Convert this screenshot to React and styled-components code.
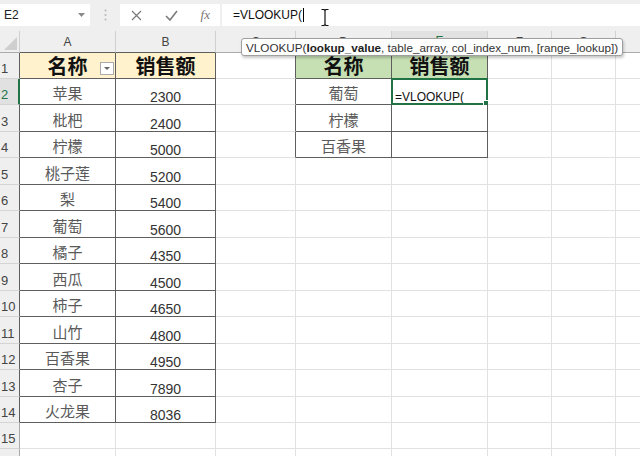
import React from "react";
import styled, { createGlobalStyle } from "styled-components";

const DARK = "#5e5e5e";
const GRID = "#e1e1e1";
const GREEN = "#217346";
const CJK = `"Noto Sans CJK SC", "Noto Sans", sans-serif`;

const Global = createGlobalStyle`
  html, body { margin: 0; padding: 0; background: #fff; }
  body {
    width: 640px; height: 456px; overflow: hidden;
    font-family: "Liberation Sans", Arial, sans-serif;
  }
`;

const Page = styled.div`
  width: 640px;
  height: 456px;
  display: flex;
  flex-direction: column;
  position: relative;
  overflow: hidden;
  background: #fff;
`;

const FormulaBar = styled.div`
  height: 31px;
  flex: none;
  box-sizing: border-box;
  padding: 4px 0 5px;
  background: #efefef;
  display: flex;
  align-items: stretch;
`;

const NameBox = styled.div`
  width: 90px;
  box-sizing: border-box;
  background: #fff;
  display: flex;
  align-items: center;
  justify-content: space-between;
  padding: 0 5px 0 4px;
  font-size: 12px;
  color: #222;
`;

const Grip = styled.div`
  width: 30px;
  display: flex;
  align-items: center;
  justify-content: center;
`;

const FxBox = styled.div`
  width: 100px;
  box-sizing: border-box;
  background: #fff;
  display: flex;
  align-items: center;
  justify-content: space-between;
  padding: 0 10px 0 11px;
`;

const FxLabel = styled.span`
  font-family: "Liberation Serif", serif;
  font-style: italic;
  font-size: 13px;
  color: #777;
`;

const FormulaInput = styled.div`
  flex: 1;
  margin-left: 2px;
  background: #fff;
  display: flex;
  align-items: center;
  padding-left: 11px;
  font-size: 12px;
  color: #111;
  position: relative;
`;

const TextCaret = styled.span`
  display: inline-block;
  width: 1px;
  height: 14px;
  background: #000;
  margin-left: 1px;
`;

const IBeam = styled.svg`
  position: absolute;
  left: 98px;
  top: 4px;
`;

const Sheet = styled.div`
  display: grid;
  grid-template-columns: 20px 96px 100px 80px 96px 96px 64px 64px 64px;
  grid-template-rows: ${(p) => p.$rows};
  flex: none;
  position: relative;
`;

const Corner = styled.div`
  position: relative;
  box-sizing: border-box;
  background: #efefef;
  border-right: 1px solid #d0d0d0;
  border-bottom: 1px solid #ababab;
  &::after {
    content: "";
    position: absolute;
    right: 2px;
    bottom: 2px;
    width: 0;
    height: 0;
    border-left: 13px solid transparent;
    border-bottom: 13px solid #cfcfcf;
  }
`;

const ColHead = styled.div`
  box-sizing: border-box;
  background: ${(p) => (p.$sel ? "#e1e1e1" : "#efefef")};
  border-right: 1px solid #d0d0d0;
  border-bottom: ${(p) => (p.$sel ? `2px solid ${GREEN}` : `1px solid ${p.$bd ? DARK : "#ababab"}`)};
  color: ${(p) => (p.$sel ? GREEN : "#444")};
  font-size: 12px;
  display: flex;
  align-items: center;
  justify-content: center;
`;

const RowHead = styled.div`
  box-sizing: border-box;
  background: ${(p) => (p.$sel ? "#e1e1e1" : "#efefef")};
  border-right: ${(p) => (p.$sel ? `2px solid ${GREEN}` : `1px solid ${p.$rd ? DARK : "#ababab"}`)};
  border-bottom: 1px solid #d4d4d4;
  color: ${(p) => (p.$sel ? GREEN : "#444")};
  font-size: 13px;
  line-height: 13px;
  display: flex;
  align-items: flex-end;
  padding: 0 0 3px 1px;
`;

const Cell = styled.div`
  position: relative;
  box-sizing: border-box;
  min-width: 0;
  border-right: 1px solid ${(p) => (p.$rd ? DARK : GRID)};
  border-bottom: 1px solid ${(p) => (p.$bd ? DARK : GRID)};
  background: ${(p) => p.$fill || "#fff"};
  display: flex;
  justify-content: ${(p) => (p.$left ? "flex-start" : "center")};
  align-items: flex-end;
`;

const HeadText = styled.span`
  align-self: center;
  font-family: ${CJK};
  font-weight: 700;
  font-size: 20px;
  line-height: 20px;
  color: #111;
  margin-top: 1px;
`;

const NameText = styled.span`
  font-family: ${CJK};
  font-size: 15px;
  line-height: 15px;
  color: #5a5a5a;
  padding-bottom: 4px;
`;

const NumText = styled.span`
  font-size: 14px;
  line-height: 14px;
  color: #333;
  padding-bottom: 0;
`;

const FormulaText = styled.span`
  font-size: 12px;
  line-height: 12px;
  color: #111;
  padding: 0 0 1px 3px;
`;

const Selection = styled.div`
  position: absolute;
  top: -1px;
  left: -1px;
  right: -1px;
  bottom: -1px;
  border: 2px solid ${GREEN};
  pointer-events: none;
  &::after {
    content: "";
    position: absolute;
    right: -4px;
    bottom: -4px;
    width: 5px;
    height: 5px;
    background: ${GREEN};
    border: 1px solid #fff;
  }
`;

const FilterButton = styled.div`
  position: absolute;
  right: 1px;
  bottom: 3px;
  width: 14px;
  height: 13px;
  box-sizing: border-box;
  background: #fff;
  border: 1px solid #ababab;
  display: flex;
  align-items: center;
  justify-content: center;
  &::after {
    content: "";
    border-left: 3px solid transparent;
    border-right: 3px solid transparent;
    border-top: 3px solid #666;
  }
`;

const Tooltip = styled.div`
  position: absolute;
  left: 241px;
  top: 7px;
  height: 18px;
  box-sizing: border-box;
  padding: 0 4px;
  background: #fff;
  border: 1px solid #9f9f9f;
  border-radius: 3px;
  box-shadow: 1px 2px 3px rgba(0, 0, 0, 0.22);
  display: flex;
  align-items: center;
  white-space: nowrap;
  font-size: 11.7px;
  color: #333;
  z-index: 5;
  b { font-weight: 700; color: #222; }
`;

const fruits = [
  ["苹果", "2300"],
  ["枇杷", "2400"],
  ["柠檬", "5000"],
  ["桃子莲", "5200"],
  ["梨", "5400"],
  ["葡萄", "5600"],
  ["橘子", "4350"],
  ["西瓜", "4500"],
  ["柿子", "4650"],
  ["山竹", "4800"],
  ["百香果", "4950"],
  ["杏子", "7890"],
  ["火龙果", "8036"],
];

const lookup = ["葡萄", "柠檬", "百香果"];

// last column lies mostly beyond the window edge; its letter is not visible
const letters = ["A", "B", "C", "D", "E", "F", "G", ""];
const rowHeights = [26, 26, 27, 26, 27, 26, 27, 26, 27, 26, 27, 26, 27, 26, 26, 26];

const inTable = (r, c) =>
  (r >= 1 && r <= 14 && (c === 1 || c === 2)) || (r >= 1 && r <= 4 && (c === 4 || c === 5));

function content(r, c) {
  if (r === 1 && c === 1) return <><HeadText>名称</HeadText><FilterButton /></>;
  if (r === 1 && c === 2) return <HeadText>销售额</HeadText>;
  if (r === 1 && c === 4) return <HeadText>名称</HeadText>;
  if (r === 1 && c === 5) return <HeadText>销售额</HeadText>;
  if (r >= 2 && r <= 14 && c === 1) return <NameText>{fruits[r - 2][0]}</NameText>;
  if (r >= 2 && r <= 14 && c === 2) return <NumText>{fruits[r - 2][1]}</NumText>;
  if (r >= 2 && r <= 4 && c === 4) return <NameText>{lookup[r - 2]}</NameText>;
  if (r === 2 && c === 5) return <><FormulaText>=VLOOKUP(</FormulaText><Selection /></>;
  return null;
}

function fill(r, c) {
  if (r === 1 && (c === 1 || c === 2)) return "#FFF2CC";
  if (r === 1 && (c === 4 || c === 5)) return "#C6E0B4";
  return null;
}

export default function App() {
  const rows = ["22px", ...rowHeights.map((h) => `${h}px`)].join(" ");
  const cells = [];
  cells.push(<Corner key="corner" />);
  letters.forEach((l, i) => {
    cells.push(
      <ColHead key={`h${i}`} $sel={l === "E"} $bd={inTable(1, i + 1)}>
        {l}
      </ColHead>
    );
  });
  rowHeights.forEach((_, idx) => {
    const r = idx + 1;
    cells.push(
      <RowHead key={`r${r}`} $sel={r === 2} $rd={inTable(r, 1)}>
        {r <= 15 ? r : null}
      </RowHead>
    );
    for (let c = 1; c <= 8; c++) {
      cells.push(
        <Cell
          key={`${r}-${c}`}
          $rd={inTable(r, c) || inTable(r, c + 1)}
          $bd={inTable(r, c) || inTable(r + 1, c)}
          $fill={fill(r, c)}
          $left={r === 2 && c === 5}
        >
          {content(r, c)}
        </Cell>
      );
    }
  });

  return (
    <Page>
      <Global />
      <FormulaBar>
        <NameBox>
          <span>E2</span>
          <svg width="7" height="4" viewBox="0 0 7 4">
            <path d="M0 0h7L3.5 4z" fill="#8a8a8a" />
          </svg>
        </NameBox>
        <Grip>
          <svg width="3" height="12" viewBox="0 0 3 12">
            <circle cx="1.5" cy="1.5" r="1" fill="#b5b5b5" />
            <circle cx="1.5" cy="6" r="1" fill="#b5b5b5" />
            <circle cx="1.5" cy="10.5" r="1" fill="#b5b5b5" />
          </svg>
        </Grip>
        <FxBox>
          <svg width="11" height="11" viewBox="0 0 11 11">
            <path d="M1 1l9 9M10 1l-9 9" stroke="#7a7a7a" strokeWidth="1.2" />
          </svg>
          <svg width="13" height="11" viewBox="0 0 13 11">
            <path d="M1 6l4 4 7-9" stroke="#7a7a7a" strokeWidth="1.6" fill="none" />
          </svg>
          <FxLabel>fx</FxLabel>
        </FxBox>
        <FormulaInput>
          <span>=VLOOKUP(</span>
          <TextCaret />
          <IBeam width="10" height="19" viewBox="0 0 10 19">
            <path
              d="M1.5 1.5h2.5l1 1 1-1h2.5M5 2.5v14M1.5 17.5h2.5l1-1 1 1h2.5"
              stroke="#111"
              strokeWidth="1.2"
              fill="none"
            />
          </IBeam>
        </FormulaInput>
      </FormulaBar>
      <Sheet $rows={rows}>
        {cells}
        <Tooltip>
          VLOOKUP(<b>lookup_value</b>, table_array, col_index_num, [range_lookup])
        </Tooltip>
      </Sheet>
    </Page>
  );
}
